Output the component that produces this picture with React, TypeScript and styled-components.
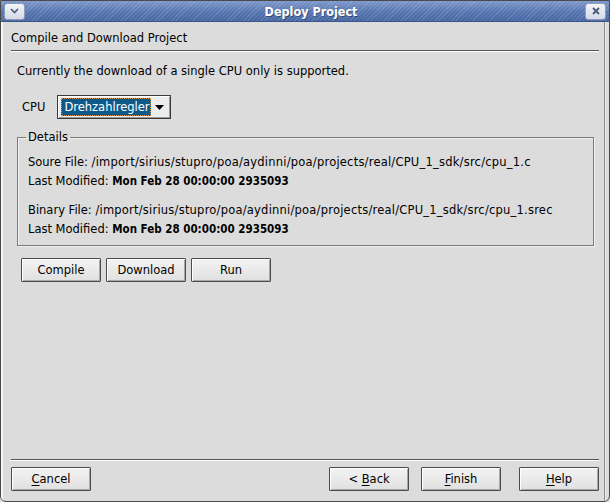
import React from "react";
import styled, { createGlobalStyle } from "styled-components";

const Global = createGlobalStyle`
  html, body { margin: 0; padding: 0; background: #dcdcdc; }
  body { font-family: "DejaVu Sans", "Liberation Sans", sans-serif; font-size: 11.5px; color: #000; }
  b { font-stretch: semi-condensed; }
  * { box-sizing: border-box; }
`;

const Window = styled.div`
  width: 610px;
  height: 502px;
  display: flex;
  flex-direction: column;
  background: #dcdcdc;
  border: 1px solid #4a4a4a;
  border-radius: 0 0 6px 6px;
  overflow: hidden;
`;

const TitleBar = styled.div`
  height: 21px;
  display: flex;
  align-items: center;
  padding: 0 3px;
  background:
    repeating-linear-gradient(-45deg, rgba(255,255,255,0.13) 0 1px, rgba(255,255,255,0) 1px 3px),
    linear-gradient(to bottom, #7d98cb, #5574b0 55%, #4866a3);
  border-bottom: 1px solid #3c5589;
`;

const TitleText = styled.div`
  flex: 1;
  text-align: center;
  color: #fff;
  font-weight: bold;
  font-size: 12.5px;
  font-stretch: semi-condensed;
  text-shadow: 1px 1px 0 rgba(0,0,0,0.35);
  padding-left: 12px;
  padding-top: 1px;
`;

const TitleButton = styled.div`
  width: 21px;
  height: 17px;
  border: 1px solid #8e9cb8;
  border-radius: 3px;
  background: linear-gradient(to bottom, #f2f4f8, #d4dae6);
  display: flex;
  align-items: center;
  justify-content: center;
  color: #4a5a7a;
`;

const Client = styled.div`
  flex: 1;
  display: flex;
  flex-direction: column;
  border-left: 2px solid #f4f4f4;
  border-right: 1px solid #eaeaea;
  margin-right: 3px;
`;

const Inner = styled.div`
  flex: 1;
  display: flex;
  flex-direction: column;
  padding: 9px 5px 10px 8px;
  border-right: 1px solid #8a8a8a;
`;

const PageTitle = styled.div`
  padding-bottom: 5px;
  border-bottom: 1px solid #555;
  box-shadow: 0 1px 0 #fff;
`;

const Body = styled.div`
  flex: 1;
  display: flex;
  flex-direction: column;
  padding: 13px 3px 0 6px;
`;

const Note = styled.div``;

const CpuRow = styled.div`
  display: flex;
  align-items: center;
  gap: 12px;
  margin-top: 17px;
  padding-left: 5px;
`;

const Combo = styled.div`
  width: 114px;
  height: 24px;
  border: 1px solid #3a3a3a;
  background: #ececec;
  box-shadow: inset 1px 1px 0 #fff, inset -1px -1px 0 #999;
  display: flex;
  align-items: center;
  padding: 2px;
`;

const ComboValue = styled.div`
  flex: 1;
  height: 18px;
  background: #0d5a8a;
  color: #fff;
  outline: 1px dotted #e48f3a;
  outline-offset: -1px;
  display: flex;
  align-items: center;
  padding-left: 3px;
  margin-left: 1px;
`;

const ComboArrow = styled.div`
  width: 17px;
  display: flex;
  justify-content: center;
  align-items: center;
`;

const Group = styled.fieldset`
  margin: 11px 0 0 0;
  padding: 9px 10px 6px 10px;
  border: 1px solid #7a7a7a;
  box-shadow: inset 1px 1px 0 #f0f0f0, 1px 1px 0 #f0f0f0;
  min-width: 0;
  width: 577px;
`;

const Legend = styled.legend`
  padding: 0 2px;
  margin-left: -2px;
`;

const Line = styled.div<{ $gap?: number }>`
  line-height: 19px;
  margin-top: ${(p) => p.$gap ?? 0}px;
  white-space: nowrap;
`;

const Path = styled.span`
  letter-spacing: 0.22px;
`;

const ButtonRow = styled.div`
  display: flex;
  gap: 5px;
  margin-top: 12px;
  padding-left: 4px;
`;

const Button = styled.button`
  width: 80px;
  height: 24px;
  font: inherit;
  color: #000;
  border: 1px solid #4c4c4c;
  border-radius: 1px;
  background: linear-gradient(to bottom, #f3f3f3, #e0e0e0);
  box-shadow: inset 1px 1px 0 #fff, inset -1px -1px 0 #a8a8a8;
  padding: 0;
  display: flex;
  align-items: center;
  justify-content: center;
`;

const Footer = styled.div`
  border-top: 1px solid #555;
  box-shadow: inset 0 1px 0 #fff;
  padding-top: 7px;
  display: flex;
  align-items: center;
`;

const Spacer = styled.div`
  flex: 1;
`;

const FooterGroup = styled.div`
  display: flex;
  gap: 12px;
`;

const FinishHelp = styled.div`
  display: flex;
  gap: 18px;
`;

const U = styled.span`
  text-decoration: underline;
  text-underline-offset: 2px;
`;

export default function App() {
  return (
    <>
      <Global />
      <Window>
        <TitleBar>
          <TitleButton>
            <svg width="9" height="6" viewBox="0 0 9 6">
              <path d="M1 1 L4.5 4.5 L8 1" fill="none" stroke="#4a5a7a" strokeWidth="1.6" />
            </svg>
          </TitleButton>
          <TitleText>Deploy Project</TitleText>
          <TitleButton>
            <svg width="8" height="8" viewBox="0 0 8 8">
              <path d="M1 1 L7 7 M7 1 L1 7" fill="none" stroke="#4a5a7a" strokeWidth="1.8" />
            </svg>
          </TitleButton>
        </TitleBar>
        <Client>
          <Inner>
            <PageTitle>Compile and Download Project</PageTitle>
            <Body>
              <Note>Currently the download of a single CPU only is supported.</Note>
              <CpuRow>
                <span>CPU</span>
                <Combo>
                  <ComboValue>Drehzahlregler</ComboValue>
                  <ComboArrow>
                    <svg width="9" height="5" viewBox="0 0 9 5">
                      <path d="M0 0 H9 L4.5 5 Z" fill="#000" />
                    </svg>
                  </ComboArrow>
                </Combo>
              </CpuRow>
              <Group>
                <Legend>Details</Legend>
                <Line>
                  Soure File: <Path>/import/sirius/stupro/poa/aydinni/poa/projects/real/CPU_1_sdk/src/cpu_1.c</Path>
                </Line>
                <Line>
                  Last Modified: <b>Mon Feb 28 00:00:00 2935093</b>
                </Line>
                <Line $gap={10}>
                  Binary File: <Path>/import/sirius/stupro/poa/aydinni/poa/projects/real/CPU_1_sdk/src/cpu_1.srec</Path>
                </Line>
                <Line>
                  Last Modified: <b>Mon Feb 28 00:00:00 2935093</b>
                </Line>
              </Group>
              <ButtonRow>
                <Button>Compile</Button>
                <Button>Download</Button>
                <Button>Run</Button>
              </ButtonRow>
              <Spacer />
            </Body>
            <Footer>
              <Button>
                <span><U>C</U>ancel</span>
              </Button>
              <Spacer />
              <FooterGroup>
                <Button>
                  <span>&lt; <U>B</U>ack</span>
                </Button>
                <FinishHelp>
                  <Button>
                    <span><U>F</U>inish</span>
                  </Button>
                  <Button>
                    <span><U>H</U>elp</span>
                  </Button>
                </FinishHelp>
              </FooterGroup>
            </Footer>
          </Inner>
        </Client>
      </Window>
    </>
  );
}
